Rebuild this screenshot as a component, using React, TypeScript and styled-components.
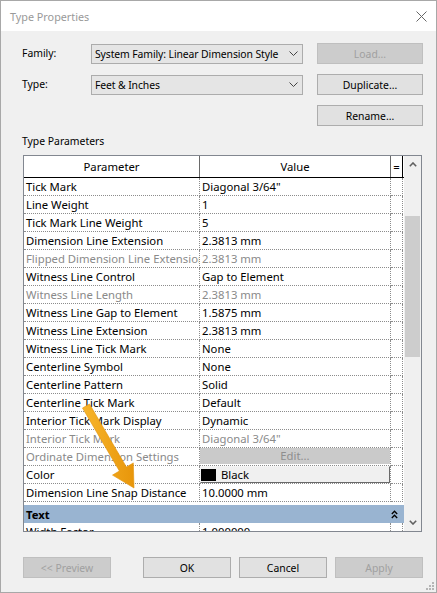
import styled, { createGlobalStyle } from 'styled-components';

const GlobalStyle = createGlobalStyle`
  html, body {
    margin: 0;
    padding: 0;
    background: #ffffff;
  }
  body {
    font-family: "Noto Sans", "Open Sans", sans-serif;
    font-size: 10.4px;
    color: #000;
  }
  * {
    box-sizing: border-box;
  }
`;

type Row = {
  name: string;
  value: string;
  muted?: boolean;
  kind?: 'text' | 'edit' | 'color';
};

const rows: Row[] = [
  { name: 'Tick Mark', value: 'Diagonal 3/64"' },
  { name: 'Line Weight', value: '1' },
  { name: 'Tick Mark Line Weight', value: '5' },
  { name: 'Dimension Line Extension', value: '2.3813 mm' },
  { name: 'Flipped Dimension Line Extension', value: '2.3813 mm', muted: true },
  { name: 'Witness Line Control', value: 'Gap to Element' },
  { name: 'Witness Line Length', value: '2.3813 mm', muted: true },
  { name: 'Witness Line Gap to Element', value: '1.5875 mm' },
  { name: 'Witness Line Extension', value: '2.3813 mm' },
  { name: 'Witness Line Tick Mark', value: 'None' },
  { name: 'Centerline Symbol', value: 'None' },
  { name: 'Centerline Pattern', value: 'Solid' },
  { name: 'Centerline Tick Mark', value: 'Default' },
  { name: 'Interior Tick Mark Display', value: 'Dynamic' },
  { name: 'Interior Tick Mark', value: 'Diagonal 3/64"', muted: true },
  { name: 'Ordinate Dimension Settings', value: 'Edit...', muted: true, kind: 'edit' },
  { name: 'Color', value: 'Black', kind: 'color' },
  { name: 'Dimension Line Snap Distance', value: '10.0000 mm' },
];

// only the top of this row shows above the grid's lower edge
const textRows: Row[] = [{ name: 'Width Factor', value: '1.000000' }];

const Chevron = ({ up = false, color = '#444' }: { up?: boolean; color?: string }) => (
  <svg width="9" height="5" viewBox="0 0 9 5">
    <polyline
      points={up ? '0.5,4.5 4.5,0.5 8.5,4.5' : '0.5,0.5 4.5,4.5 8.5,0.5'}
      fill="none"
      stroke={color}
      strokeWidth="1"
    />
  </svg>
);

const ScrollArrow = ({ up = false }: { up?: boolean }) => (
  <svg width="8" height="5" viewBox="0 0 8 5">
    <polyline
      points={up ? '0.8,4.2 4,1 7.2,4.2' : '0.8,0.8 4,4 7.2,0.8'}
      fill="none"
      stroke="#606060"
      strokeWidth="1.6"
    />
  </svg>
);

const Collapse = () => (
  <svg width="7" height="9" viewBox="0 0 7 9">
    <polyline points="0.8,4 3.5,1.2 6.2,4" fill="none" stroke="#000" strokeWidth="1.3" />
    <polyline points="0.8,8 3.5,5.2 6.2,8" fill="none" stroke="#000" strokeWidth="1.3" />
  </svg>
);

const CloseIcon = () => (
  <svg width="11" height="11" viewBox="0 0 11 11">
    <line x1="0.5" y1="0.5" x2="10.5" y2="10.5" stroke="#666" strokeWidth="1" />
    <line x1="10.5" y1="0.5" x2="0.5" y2="10.5" stroke="#666" strokeWidth="1" />
  </svg>
);

const GripIcon = () => (
  <svg width="8" height="8" viewBox="0 0 8 8">
    <rect x="6" y="0" width="2" height="2" fill="#b5b5b5" />
    <rect x="3" y="3" width="2" height="2" fill="#b5b5b5" />
    <rect x="6" y="3" width="2" height="2" fill="#b5b5b5" />
    <rect x="0" y="6" width="2" height="2" fill="#b5b5b5" />
    <rect x="3" y="6" width="2" height="2" fill="#b5b5b5" />
    <rect x="6" y="6" width="2" height="2" fill="#b5b5b5" />
  </svg>
);

const ParamRow = ({ row }: { row: Row }) => (
  <Styled.Row>
    <Styled.Cell $muted={row.muted}>{row.name}</Styled.Cell>
    <Styled.Cell $muted={row.muted} $flush={row.kind === 'edit' || row.kind === 'color'}>
      {row.kind === 'edit' && <Styled.EditBox>{row.value}</Styled.EditBox>}
      {row.kind === 'color' && (
        <Styled.ColorButton>
          <Styled.Swatch />
          {row.value}
        </Styled.ColorButton>
      )}
      {!row.kind && row.value}
    </Styled.Cell>
    <Styled.Cell />
  </Styled.Row>
);

const App = () => {
  return (
    <>
      <GlobalStyle />
      <Styled.Window>
        <Styled.TitleBar>
          <Styled.Title>Type Properties</Styled.Title>
          <CloseIcon />
        </Styled.TitleBar>
        <Styled.Body>
          <Styled.TopForm>
            <Styled.Label>Family:</Styled.Label>
            <Styled.Combo>
              <span>System Family: Linear Dimension Style</span>
              <Chevron />
            </Styled.Combo>
            <Styled.FormButton disabled>Load...</Styled.FormButton>
            <Styled.Label>Type:</Styled.Label>
            <Styled.Combo>
              <span>Feet &amp; Inches</span>
              <Chevron />
            </Styled.Combo>
            <Styled.FormButton>Duplicate...</Styled.FormButton>
            <Styled.FormButton $col={3}>Rename...</Styled.FormButton>
          </Styled.TopForm>

          <Styled.SectionLabel>Type Parameters</Styled.SectionLabel>

          <Styled.PropGrid>
            <Styled.Table>
              <Styled.HeaderRow>
                <Styled.HeaderCell>Parameter</Styled.HeaderCell>
                <Styled.HeaderCell>Value</Styled.HeaderCell>
                <Styled.HeaderCell>=</Styled.HeaderCell>
              </Styled.HeaderRow>
              {rows.map((row) => (
                <ParamRow key={row.name} row={row} />
              ))}
              <Styled.GroupRow>
                <span>Text</span>
                <Collapse />
              </Styled.GroupRow>
              {textRows.map((row) => (
                <ParamRow key={row.name} row={row} />
              ))}
            </Styled.Table>
            <Styled.ScrollBar>
              <Styled.ScrollButton>
                <ScrollArrow up />
              </Styled.ScrollButton>
              <Styled.Track>
                <Styled.Thumb $top={43} $size={141} />
              </Styled.Track>
              <Styled.ScrollButton>
                <ScrollArrow />
              </Styled.ScrollButton>
            </Styled.ScrollBar>
          </Styled.PropGrid>

          <Styled.Footer>
            <Styled.Button disabled>&lt;&lt; Preview</Styled.Button>
            <Styled.FooterGroup>
              <Styled.Button>OK</Styled.Button>
              <Styled.Button>Cancel</Styled.Button>
              <Styled.Button disabled>Apply</Styled.Button>
            </Styled.FooterGroup>
          </Styled.Footer>
        </Styled.Body>

        <Styled.Grip>
          <GripIcon />
        </Styled.Grip>

        <Styled.Annotation width="437" height="593" viewBox="0 0 437 593">
          <defs>
            <linearGradient id="arrowFill" x1="0" y1="0" x2="1" y2="0">
              <stop offset="0" stopColor="#f7b52c" />
              <stop offset="1" stopColor="#e8960a" />
            </linearGradient>
          </defs>
          <polygon
            points="89.5,404 126.4,467 133.3,462.9 134,488 112.5,475.1 119.4,471 82.5,408"
            fill="url(#arrowFill)"
            stroke="#e39208"
            strokeWidth="0.6"
            strokeLinejoin="round"
          />
        </Styled.Annotation>
      </Styled.Window>
    </>
  );
};

export default App;

const Button = styled.button`
  height: 21px;
  width: 88px;
  margin: 0;
  padding: 0;
  font: inherit;
  color: #000;
  background: #e1e1e1;
  border: 1px solid #adadad;
  text-align: center;
  white-space: nowrap;

  &:disabled {
    background: #cccccc;
    border-color: #bfbfbf;
    color: #a0a0a0;
  }
`;

const Styled = {
  Window: styled.div`
    position: relative;
    width: 437px;
    height: 593px;
    border: 1px solid #a8a8a8;
    background: #f0f0f0;
    display: flex;
    flex-direction: column;
    overflow: hidden;
  `,
  TitleBar: styled.div`
    height: 30px;
    flex: none;
    background: #ffffff;
    display: flex;
    align-items: center;
    justify-content: space-between;
    padding: 0 9px 0 9px;
  `,
  Title: styled.div`
    font-size: 10.8px;
    color: #999999;
  `,
  Body: styled.div`
    flex: 1;
    padding: 12px 13px 0 21px;
    display: flex;
    flex-direction: column;
  `,
  TopForm: styled.div`
    display: grid;
    grid-template-columns: 55px 212px 106px;
    grid-auto-rows: 21px;
    column-gap: 14px;
    row-gap: 10px;
    align-items: center;
  `,
  Label: styled.div`
    line-height: 21px;
  `,
  Combo: styled.div`
    height: 20px;
    border: 1px solid #acacac;
    background: #e5e5e5;
    display: flex;
    align-items: center;
    justify-content: space-between;
    padding: 0 4px 0 3px;
    white-space: nowrap;
    letter-spacing: -0.1px;
  `,
  Button,
  FormButton: styled(Button)<{ $col?: number }>`
    grid-column: ${(p) => p.$col ?? 'auto'};
    width: 100%;
  `,
  SectionLabel: styled.div`
    margin-top: 7px;
    line-height: 16px;
  `,
  PropGrid: styled.div`
    margin-top: 6px;
    margin-left: 1px;
    width: 399px;
    height: 377px;
    border: 1px solid #828790;
    background: #ffffff;
    display: flex;
    font-size: 11.3px;
  `,
  Table: styled.div`
    width: 380px;
    height: 100%;
    overflow: hidden;
    display: flex;
    flex-direction: column;
  `,
  HeaderRow: styled.div`
    flex: none;
    display: grid;
    grid-template-columns: 176px 191px 12px;
    height: 22px;
    border-bottom: 1px solid #000;
  `,
  HeaderCell: styled.div`
    border-right: 1px solid #6a6a6a;
    text-align: center;
    line-height: 21px;
    &:last-child {
      border-right-color: #000;
    }
  `,
  Row: styled.div`
    flex: none;
    display: grid;
    grid-template-columns: 176px 191px 12px;
    height: 18px;
  `,
  Cell: styled.div<{ $muted?: boolean; $flush?: boolean }>`
    border-right: 1px dotted #8c8c8c;
    border-bottom: 1px dotted #8c8c8c;
    padding-left: ${(p) => (p.$flush ? '0' : '2px')};
    line-height: 17px;
    white-space: nowrap;
    overflow: hidden;
    color: ${(p) => (p.$muted ? '#8a8a8a' : '#000')};
  `,
  EditBox: styled.div`
    height: 16px;
    background: #cacaca;
    color: #8e8e8e;
    text-align: center;
    line-height: 16px;
  `,
  ColorButton: styled.div`
    height: 17px;
    border: 1px solid;
    border-color: #f4f4f4 #6a6a6a #6a6a6a #f4f4f4;
    background: #f0f0f0;
    display: flex;
    align-items: center;
    gap: 5px;
    line-height: 15px;
  `,
  Swatch: styled.span`
    width: 15px;
    height: 12px;
    background: #000;
  `,
  GroupRow: styled.div`
    flex: none;
    height: 21px;
    border-top: 3px solid #ffffff;
    background: #99b4d1;
    display: flex;
    align-items: center;
    justify-content: space-between;
    padding: 0 6px 0 2px;
    font-weight: 700;
  `,
  ScrollBar: styled.div`
    width: 17px;
    background: #f0f0f0;
    display: flex;
    flex-direction: column;
  `,
  ScrollButton: styled.div`
    height: 17px;
    flex: none;
    display: flex;
    align-items: center;
    justify-content: center;
  `,
  Track: styled.div`
    flex: 1;
    display: flex;
    flex-direction: column;
    align-items: center;
  `,
  Thumb: styled.div<{ $top: number; $size: number }>`
    margin-top: ${(p) => p.$top}px;
    height: ${(p) => p.$size}px;
    width: 15px;
    background: #cdcdcd;
  `,
  Footer: styled.div`
    margin-top: 25px;
    margin-left: 1px;
    width: 400px;
    display: flex;
    justify-content: space-between;
  `,
  FooterGroup: styled.div`
    display: flex;
    gap: 8px;
  `,
  Grip: styled.div`
    position: absolute;
    right: 2px;
    bottom: 2px;
    display: flex;
  `,
  Annotation: styled.svg`
    position: absolute;
    left: -1px;
    top: -1px;
    pointer-events: none;
  `,
};
